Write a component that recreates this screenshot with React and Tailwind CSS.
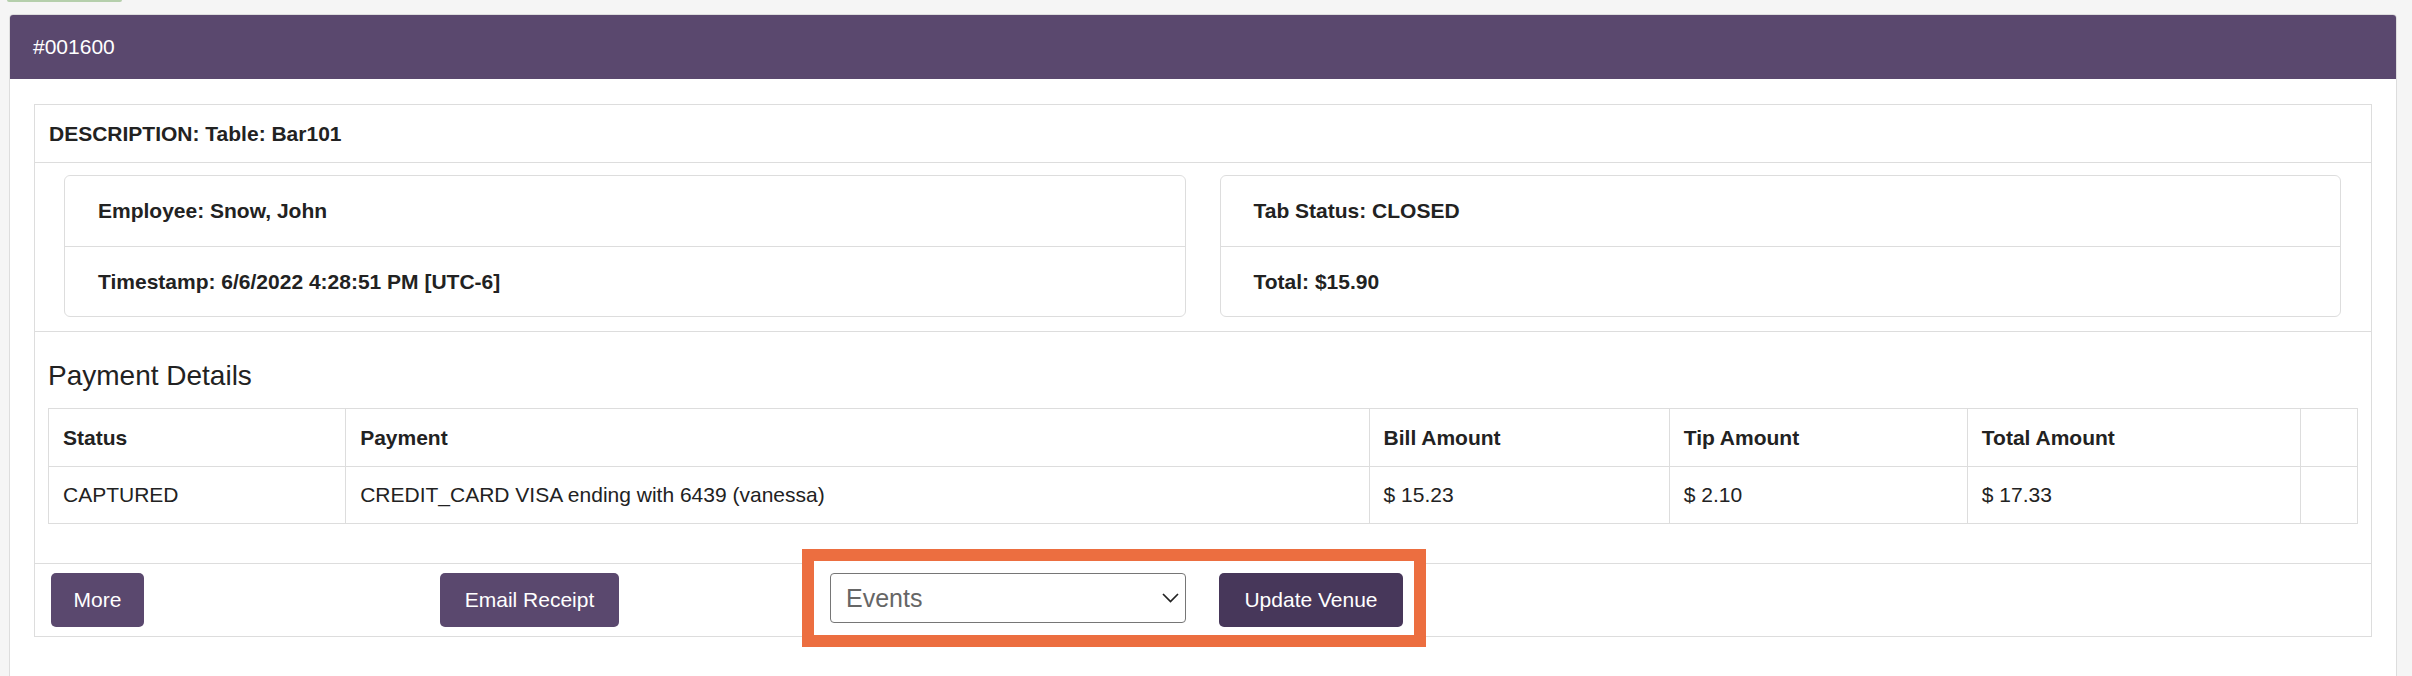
import React from "react"

const rows = [
    { status: "CAPTURED", payment: "CREDIT_CARD VISA ending with 6439 (vanessa)", bill: "$ 15.23", tip: "$ 2.10", total: "$ 17.33" },
]

const InfoCard = ({ items }) => (
    <div className="rounded-[6px] border border-[#dddddd] bg-white">
        {items.map((text, i) => (
            <div
                key={text}
                className={
                    "flex h-[70px] items-center px-[33px] font-bold text-[#222]" +
                    (i > 0 ? " border-t border-[#dddddd]" : "")
                }
            >
                {text}
            </div>
        ))}
    </div>
)

const PurpleButton = ({ children, className }) => (
    <button
        className={
            "flex h-[54px] items-center justify-center rounded-[5px] text-[21px] text-white " + className
        }
    >
        {children}
    </button>
)

export default function App() {
    return (
        <div className="min-h-screen bg-[#f5f5f5] font-['Liberation_Sans',Arial,sans-serif] text-[21px] leading-[30px] text-[#333]">
            {/* green tab peeking at top */}
            <div className="h-[14px] pl-[7px]">
                <div className="h-[2px] w-[115px] rounded-b-[3px] bg-[#b5cfac]" />
            </div>

            {/* Outer card */}
            <div className="ml-[9px] mr-[15px] overflow-hidden rounded-[4px] border border-[#dddddd] bg-white pb-[60px]">
                <div className="flex h-[64px] items-center bg-[#5a486e] px-[23px] text-white">#001600</div>

                <div className="px-[24px] pt-[25px]">
                    <div className="border border-[#dddddd]">
                        {/* Description */}
                        <div className="flex h-[58px] items-center border-b border-[#dddddd] px-[14px] font-bold text-[#222]">
                            DESCRIPTION: Table: Bar101
                        </div>

                        {/* Info cards */}
                        <div className="grid grid-cols-2 gap-[34px] border-b border-[#dddddd] pb-[14px] pl-[29px] pr-[30px] pt-[12px]">
                            <InfoCard items={["Employee: Snow, John", "Timestamp: 6/6/2022 4:28:51 PM [UTC-6]"]} />
                            <InfoCard items={["Tab Status: CLOSED", "Total: $15.90"]} />
                        </div>

                        {/* Payment details */}
                        <div className="px-[13px] pb-[39px] pt-[28px]">
                            <h4 className="mb-[17px] text-[28px] leading-[31px] text-[#222]">Payment Details</h4>
                            <table className="w-full table-fixed border-collapse border border-[#dddddd]">
                                <colgroup>
                                    <col className="w-[297px]" />
                                    <col className="w-[1023px]" />
                                    <col className="w-[300px]" />
                                    <col className="w-[298px]" />
                                    <col className="w-[333px]" />
                                    <col className="w-[57px]" />
                                </colgroup>
                                <thead>
                                    <tr className="h-[58px] text-left font-bold text-[#222]">
                                        <th className="border border-[#dddddd] px-[14px]">Status</th>
                                        <th className="border border-[#dddddd] px-[14px]">Payment</th>
                                        <th className="border border-[#dddddd] px-[14px]">Bill Amount</th>
                                        <th className="border border-[#dddddd] px-[14px]">Tip Amount</th>
                                        <th className="border border-[#dddddd] px-[14px]">Total Amount</th>
                                        <th className="border border-[#dddddd]"></th>
                                    </tr>
                                </thead>
                                <tbody>
                                    {rows.map((r) => (
                                        <tr key={r.payment} className="h-[57px] text-[#222]">
                                            <td className="border border-[#dddddd] px-[14px]">{r.status}</td>
                                            <td className="border border-[#dddddd] px-[14px]">{r.payment}</td>
                                            <td className="border border-[#dddddd] px-[14px]">{r.bill}</td>
                                            <td className="border border-[#dddddd] px-[14px]">{r.tip}</td>
                                            <td className="border border-[#dddddd] px-[14px]">{r.total}</td>
                                            <td className="border border-[#dddddd]"></td>
                                        </tr>
                                    ))}
                                </tbody>
                            </table>
                        </div>

                        {/* Footer */}
                        <div className="flex h-[73px] items-start border-t border-[#dddddd] pl-[16px]">
                            <PurpleButton className="mt-[9px] w-[93px] bg-[#5a486e]">More</PurpleButton>
                            <PurpleButton className="ml-[296px] mt-[9px] w-[179px] bg-[#5a486e]">Email Receipt</PurpleButton>

                            {/* highlighted venue controls */}
                            <div className="relative z-10 -mb-[11px] -mt-[15px] ml-[183px] flex h-[98px] w-[624px] items-start border-[12px] border-[#ec6e40] bg-white pl-[16px] pt-[12px]">
                                <div className="relative h-[50px] w-[356px]">
                                    <select className="h-full w-full appearance-none rounded-[4px] border border-[#767676] bg-white pl-[15px] text-[25px] text-[#666] outline-none">
                                        <option>Events</option>
                                    </select>
                                    <svg
                                        className="pointer-events-none absolute right-[7px] top-[20px]"
                                        width="17"
                                        height="10"
                                        viewBox="0 0 17 10"
                                        fill="none"
                                    >
                                        <polyline points="1,1 8.5,8.5 16,1" stroke="#222" strokeWidth="1.7" />
                                    </svg>
                                </div>
                                <PurpleButton className="ml-[33px] w-[184px] bg-[#47375a]">Update Venue</PurpleButton>
                            </div>
                        </div>
                    </div>
                </div>
            </div>
        </div>
    )
}
